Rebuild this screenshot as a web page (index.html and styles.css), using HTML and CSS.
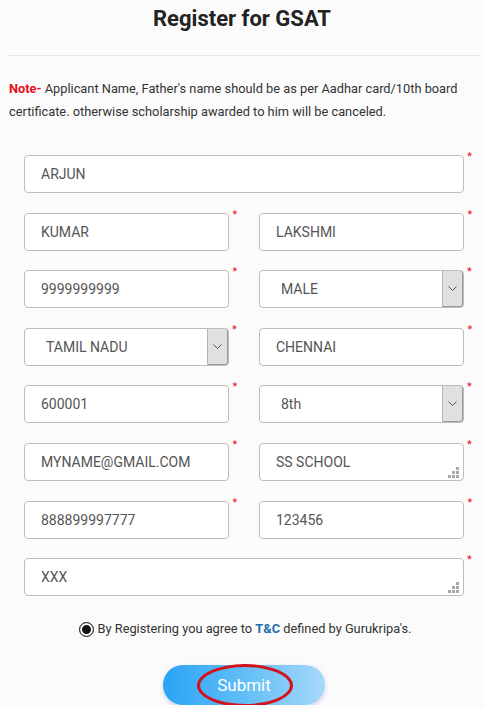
FILE: index.html
```html
<!DOCTYPE html>
<html lang="en">
<head>
  <meta charset="UTF-8"/>
  <meta name="viewport" content="width=device-width, initial-scale=1.0"/>
  <title>Register for GSAT</title>
  <link rel="stylesheet" href="styles.css">
</head>
<body>
  <div class="page">
    <h1 class="title">Register for GSAT</h1>
    <hr class="divider">

    <p class="note"><b class="note-label">Note-</b> Applicant Name, Father's name should be as per Aadhar card/10th board certificate. otherwise scholarship awarded to him will be canceled.</p>

    <form class="reg-form" onsubmit="return false">
      <div class="grid">
        <div class="field full"><input type="text" value="ARJUN"><span class="req">*</span></div>

        <div class="field"><input type="text" value="KUMAR"><span class="req">*</span></div>
        <div class="field"><input type="text" value="LAKSHMI"><span class="req">*</span></div>

        <div class="field"><input type="text" value="9999999999"><span class="req">*</span></div>
        <div class="field">
          <div class="select-box">
            <select><option>MALE</option><option>FEMALE</option></select>
            <span class="arrow"><svg width="9" height="5" viewBox="0 0 9 5"><polyline points="0.5,0.5 4.5,4.5 8.5,0.5" fill="none" stroke="#555" stroke-width="1"/></svg></span>
          </div>
          <span class="req">*</span>
        </div>

        <div class="field">
          <div class="select-box">
            <select><option>TAMIL NADU</option><option>KERALA</option></select>
            <span class="arrow"><svg width="9" height="5" viewBox="0 0 9 5"><polyline points="0.5,0.5 4.5,4.5 8.5,0.5" fill="none" stroke="#555" stroke-width="1"/></svg></span>
          </div>
          <span class="req">*</span>
        </div>
        <div class="field"><input type="text" value="CHENNAI"><span class="req">*</span></div>

        <div class="field"><input type="text" value="600001"><span class="req">*</span></div>
        <div class="field">
          <div class="select-box">
            <select><option>8th</option><option>9th</option><option>10th</option></select>
            <span class="arrow"><svg width="9" height="5" viewBox="0 0 9 5"><polyline points="0.5,0.5 4.5,4.5 8.5,0.5" fill="none" stroke="#555" stroke-width="1"/></svg></span>
          </div>
          <span class="req">*</span>
        </div>

        <div class="field"><input type="text" value="MYNAME@GMAIL.COM"><span class="req">*</span></div>
        <div class="field">
          <div class="text-box">
            <textarea rows="1">SS SCHOOL</textarea>
            <span class="grip"><svg width="11" height="11" viewBox="0 0 11 11" fill="#a8a8a8"><rect x="8" y="0" width="3" height="3"/><rect x="4" y="4" width="3" height="3"/><rect x="8" y="4" width="3" height="3"/><rect x="0" y="8" width="3" height="3"/><rect x="4" y="8" width="3" height="3"/><rect x="8" y="8" width="3" height="3"/></svg></span>
          </div>
          <span class="req">*</span>
        </div>

        <div class="field"><input type="text" value="888899997777"><span class="req">*</span></div>
        <div class="field"><input type="text" value="123456"><span class="req">*</span></div>

        <div class="field full">
          <div class="text-box">
            <textarea rows="1">XXX</textarea>
            <span class="grip"><svg width="11" height="11" viewBox="0 0 11 11" fill="#a8a8a8"><rect x="8" y="0" width="3" height="3"/><rect x="4" y="4" width="3" height="3"/><rect x="8" y="4" width="3" height="3"/><rect x="0" y="8" width="3" height="3"/><rect x="4" y="8" width="3" height="3"/><rect x="8" y="8" width="3" height="3"/></svg></span>
          </div>
          <span class="req">*</span>
        </div>
      </div>

      <label class="agree">
        <input type="radio" checked>
        <span>By Registering you agree to <a href="#" class="tc">T&amp;C</a> defined by Gurukripa's.</span>
      </label>

      <div class="actions">
        <button type="submit" class="submit-btn">Submit<span class="mark"></span></button>
      </div>
    </form>
  </div>
</body>
</html>
```

FILE: styles.css
```css
:root {
  --border: #bdbdbd;
  --text: #555;
  --red: #e8101c;
  --blue: #1f6fae;
}
* { margin:0; padding:0; box-sizing:border-box; }
body { font-family:Roboto,'Liberation Sans',sans-serif; background:#fbfbfb; color:#333; }

.page { padding-top:6px; }
.title {
  font-size:22px; line-height:26px; font-weight:700;
  text-align:center; color:#222;
}
.divider {
  border:none; border-top:1px solid #e8e8e8;
  margin:23px 4px 0 8px;
}
.note {
  font-size:12.8px; line-height:23px; color:#333;
  padding:21px 10px 0 9px;
}
.note-label { color:var(--red); font-weight:700; }

.reg-form { padding:32px 10px 0 24px; }
.grid {
  display:grid; grid-template-columns:215px 215px;
  column-gap:20px; row-gap:19.6px;
}
.field { display:flex; align-items:flex-start; }
.field.full { grid-column:1 / 3; }
.req {
  width:10px; color:var(--red); font-size:11px; line-height:8px;
  margin-top:-2px; padding-left:3px;
}
.field input, .field select, .field textarea {
  width:100%; height:38px; background:#fff;
  border:1px solid var(--border); border-radius:4px;
  font-family:inherit; font-size:14px; color:var(--text);
  padding:0 16px; outline:none;
}
.select-box, .text-box { position:relative; flex:1; }
.field select { appearance:none; padding-left:21px; }
.field textarea {
  display:block; resize:none; overflow:hidden;
  line-height:20px; padding-top:8px;
}
.arrow {
  position:absolute; top:1px; right:1px; bottom:1px; width:21px;
  background:#e0e0e0; border-left:1px solid #b5b5b5;
  border-right:1px solid #9a9a9a; border-bottom:1px solid #9a9a9a;
  border-radius:0 3px 3px 0;
  display:flex; align-items:center; justify-content:center;
  pointer-events:none;
}
.grip {
  position:absolute; right:5px; bottom:3px; width:11px; height:11px;
  display:flex; pointer-events:none;
}

.agree {
  display:flex; align-items:center; justify-content:center; gap:4px;
  margin:23px 0 0 -8px; font-size:12.8px; line-height:20px; color:#333;
}
.agree input {
  appearance:none; width:15px; height:15px; border-radius:50%;
  border:1.5px solid #111; background:#fff; margin:0;
  box-shadow:inset 0 0 0 2px #fff, inset 0 0 0 7px #111;
}
.tc { color:var(--blue); font-weight:700; text-decoration:none; }

.actions { display:flex; justify-content:center; margin:26px 0 0 -10px; }
.submit-btn {
  position:relative; width:162px; height:40px; border:none; border-radius:20px;
  background:linear-gradient(90deg,#2aa4f5 0%,#62bdf6 50%,#a6d9f8 100%);
  color:#fff; font-family:inherit; font-size:17px; cursor:pointer;
  box-shadow:0 2px 5px rgba(120,110,200,0.3);
}
.mark {
  position:absolute; left:34px; top:-1px; width:96px; height:43px;
  border:3px solid #d3111b; border-radius:50%;
}
```
